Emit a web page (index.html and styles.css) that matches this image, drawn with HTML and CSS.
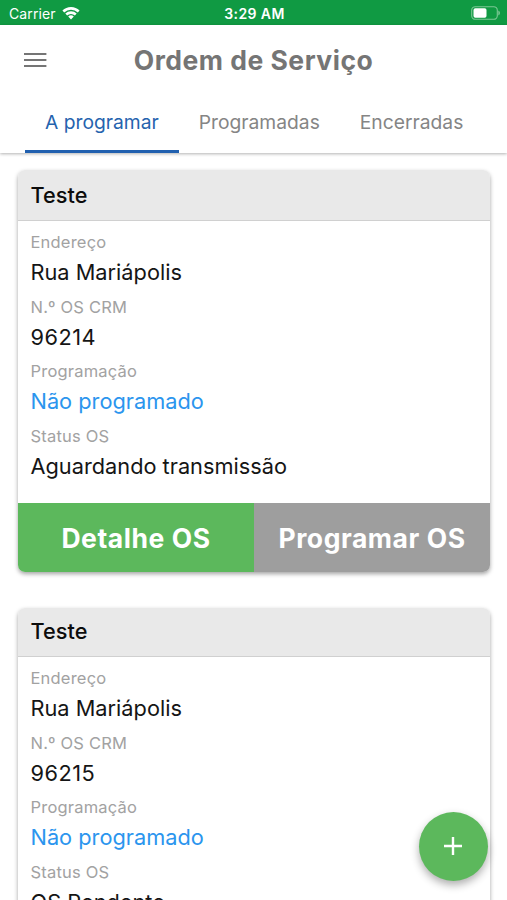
FILE: index.html
```html
<!DOCTYPE html>
<html lang="pt-BR">
<head>
<meta charset="utf-8">
<title>Ordem de Serviço</title>
<link rel="stylesheet" href="styles.css">
</head>
<body>
<div class="screen">
  <div class="status-bar">
    <div class="carrier"><span>Carrier</span>
      <svg class="wifi" viewBox="0 0 18 14"><path d="M0.4 4.6a12.2 12.2 0 0 1 17.2 0l-1.8 1.9a9.6 9.6 0 0 0-13.6 0zM3.3 7.6a8.1 8.1 0 0 1 11.4 0l-1.8 1.9a5.5 5.5 0 0 0-7.8 0zM6.2 10.5a4 4 0 0 1 5.6 0L9 13.4z"/></svg>
    </div>
    <div class="clock">3:29 AM</div>
    <svg class="battery" viewBox="0 0 29 14"><rect x=".7" y=".7" width="25.6" height="12.6" rx="3.6"/><path class="cap" d="M27.3 4.5v5q1.7-.8 1.7-2.5t-1.7-2.5"/><rect class="charge" x="2.5" y="2.3" width="13" height="9.4" rx="1.8"/></svg>
  </div>
  <header class="app-bar">
    <div class="title-row">
      <svg class="menu" viewBox="0 0 24 16"><path d="M0 2h22.4M0 8h22.4M0 14h22.4"/></svg>
      <h1>Ordem de Serviço</h1>
    </div>
    <nav class="tabs">
      <a class="tab active">A programar</a>
      <a class="tab">Programadas</a>
      <a class="tab">Encerradas</a>
    </nav>
  </header>
  <main class="orders">
    <article class="card">
      <h2>Teste</h2>
      <dl class="fields">
        <dt>Endereço</dt><dd>Rua Mariápolis</dd>
        <dt>N.º OS CRM</dt><dd class="number">96214</dd>
        <dt>Programação</dt><dd class="pending">Não programado</dd>
        <dt>Status OS</dt><dd>Aguardando transmissão</dd>
      </dl>
      <div class="actions"><button class="detail">Detalhe OS</button><button class="schedule">Programar OS</button></div>
    </article>
    <article class="card">
      <h2>Teste</h2>
      <dl class="fields">
        <dt>Endereço</dt><dd>Rua Mariápolis</dd>
        <dt>N.º OS CRM</dt><dd class="number">96215</dd>
        <dt>Programação</dt><dd class="pending">Não programado</dd>
        <dt>Status OS</dt><dd>OS Pendente</dd>
      </dl>
    </article>
  </main>
  <button class="fab" aria-label="Adicionar"><svg viewBox="0 0 20 20"><path d="M10 1v18M1 10h18"/></svg></button>
</div>
</body>
</html>
```
FILE: styles.css
```css
* { box-sizing: border-box; }
body { margin: 0; font-family: Inter, "Liberation Sans", sans-serif; background: #fff; }
.screen { position: relative; width: 507px; height: 900px; overflow: hidden; }
.status-bar { height: 25px; display: grid; grid-template-columns: 1fr auto 1fr; align-items: center; padding: 2px 7px 0 9px; background: #109a43; color: #fff; font-size: 14px; }
.carrier { display: flex; align-items: center; gap: 6px; letter-spacing: .1px; }
.wifi { width: 18px; height: 14px; fill: #fff; margin-top: -2px; }
.clock { font-weight: 600; font-size: 14px; letter-spacing: .4px; }
.battery { width: 29px; height: 14px; justify-self: end; margin-top: -1px; fill: none; stroke: #7cc795; stroke-width: 1.1; }
.battery .charge { fill: #fff; stroke: none; }
.battery .cap { fill: #7cc795; stroke: none; }
.app-bar { height: 128px; box-shadow: 0 1px 3px rgba(0,0,0,.3); }
.title-row { height: 68px; padding-top: 2px; display: grid; grid-template-columns: 48px 1fr 48px; align-items: center; }
.menu { width: 24px; height: 16px; margin-left: 24px; fill: none; stroke: #757575; stroke-width: 2.2; }
h1 { margin: 0; text-align: center; font-size: 26.5px; font-weight: 700; letter-spacing: .5px; color: #757575; line-height: 32px; }
.tabs { height: 60px; display: flex; padding-left: 25px; }
.tab { height: 60px; padding: 0 20px; font-size: 19.25px; line-height: 58px; color: #858585; white-space: nowrap; }
.tab.active { color: #2563ae; border-bottom: 3px solid #2160af; }
.orders { padding: 17px 17px 0 18px; }
.card { height: 402px; margin-bottom: 36px; border-radius: 7px; overflow: hidden; background: #fff; box-shadow: 0 2px 4px rgba(0,0,0,.36); }
h2 { margin: 0; height: 51px; padding-left: 12.6px; background: #e9e9e9; border-bottom: 1px solid #d0d0d0; font-size: 21.7px; font-weight: 500; line-height: 51px; color: #0c0c0c; }
.card + .card h2 { height: 49px; line-height: 47px; }
.fields { margin: 0; height: 282px; padding: 7.8px 12.5px 0; }
dt { height: 26px; font-size: 16.5px; letter-spacing: .2px; line-height: 27px; color: #a2a2a2; }
dd { height: 38.8px; margin: 0; font-size: 21.75px; line-height: 34px; color: #151515; }
.number { letter-spacing: .5px; }
.pending { color: #2b95ee; }
.actions { display: grid; grid-template-columns: 1fr 1fr; height: 69px; }
.actions button { border: 0; padding: 0; color: #fff; font: 700 26.5px/68px Inter, sans-serif; letter-spacing: .55px; white-space: nowrap; }
.detail { background: #5cb85c; }
.schedule { background: #9e9e9e; }
.fab { position: absolute; left: 418.5px; top: 811.5px; width: 69px; height: 69px; border: 0; border-radius: 50%; padding: 0; display: grid; place-items: center; background: #5cb85c; box-shadow: 0 4px 8px rgba(0,0,0,.32); }
.fab svg { width: 20px; height: 20px; stroke: #fff; stroke-width: 2.4; }
```
